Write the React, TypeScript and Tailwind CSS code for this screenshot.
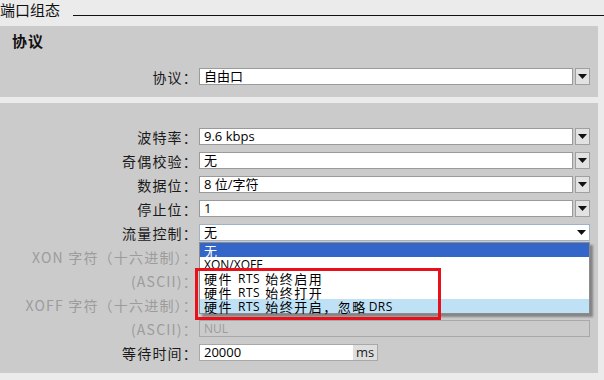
import React from "react";

const cjk = { fontFamily: '"Noto Sans CJK SC", "Noto Sans", sans-serif' };
const latin = { fontFamily: '"Open Sans", "Noto Sans CJK SC", sans-serif' };

function Arrow() {
  return (
    <svg width="9" height="5" viewBox="0 0 9 5">
      <path d="M0 0 L9 0 L4.5 5 Z" fill="#111" />
    </svg>
  );
}

function Combo({ value, active }: { value: string; active?: boolean }) {
  return (
    <div className="flex h-[17px] w-[391px]">
      <div
        className={`flex h-full flex-1 items-center border bg-white pl-[4px] text-[13px] leading-none text-black ${
          active ? "border-[#9fb3c8]" : "border-[#9a9a9a]"
        }`}
        style={latin}
      >
        {value}
      </div>
      {active ? (
        <div className="ml-[-1px] flex h-full w-[17px] items-center justify-center border border-l-0 border-[#9fb3c8] bg-white">
          <Arrow />
        </div>
      ) : (
        <div className="ml-[2px] flex h-full w-[15px] items-center justify-center border border-[#a0a0a0] bg-[#e2e2e2]">
          <Arrow />
        </div>
      )}
    </div>
  );
}

function Row({
  label,
  children,
  gray,
}: {
  label: string;
  children?: React.ReactNode;
  gray?: boolean;
}) {
  return (
    <div className="flex h-[17px] items-center">
      <div
        className={`w-[199px] pr-[1px] text-right text-[14px] leading-none tracking-[1.2px] ${
          gray ? "text-[#9c9c9c]" : "text-[#1a1a1a]"
        }`}
        style={cjk}
      >
        {label}
      </div>
      {children}
    </div>
  );
}

function Item({ children, cls }: { children: React.ReactNode; cls?: string }) {
  return (
    <div
      className={`flex h-[14px] items-center pl-[4px] text-[13px] leading-[13px] tracking-[1.5px] text-black ${cls ?? ""}`}
    >
      {children}
    </div>
  );
}

function L({ children }: { children: React.ReactNode }) {
  return (
    <span className="mx-[5px] text-[12px] leading-[13px] tracking-[0.5px]" style={latin}>
      {children}
    </span>
  );
}

export default function App() {
  return (
    <div className="relative h-[380px] w-[604px] overflow-hidden bg-[#ebebeb]" style={cjk}>
      {/* header */}
      <div className="flex h-[26px] items-start">
        <div className="mt-[1px] text-[15px] leading-[18px] text-[#111]">端口组态</div>
        <div className="ml-[13px] mt-[15px] flex-1 border-t border-[#111]" />
      </div>

      {/* section 1 */}
      <div className="h-[71px] w-[598px] bg-[#cbcbcb] pt-[6px]">
        <div className="pl-[12px] text-[15px] font-bold leading-[18px] tracking-[1px] text-[#111]">协议</div>
        <div className="mt-[18px]">
          <Row label="协议：">
            <Combo value="自由口" />
          </Row>
        </div>
      </div>

      {/* separator */}
      <div className="h-[6px]" />

      {/* section 2 */}
      <div className="flex h-[270px] w-[598px] flex-col gap-[7px] bg-[#cbcbcb] pt-[25px]">
        <Row label="波特率：">
          <Combo value="9.6 kbps" />
        </Row>
        <Row label="奇偶校验：">
          <Combo value="无" />
        </Row>
        <Row label="数据位：">
          <Combo value="8 位/字符" />
        </Row>
        <Row label="停止位：">
          <Combo value="1" />
        </Row>
        <Row label="流量控制：">
          <Combo value="无" active />
        </Row>
        <Row label="XON 字符（十六进制）：" gray />
        <Row label="(ASCII)：" gray />
        <Row label="XOFF 字符（十六进制）：" gray />
        <Row label="(ASCII)：" gray>
          <div
            className="flex h-[17px] w-[391px] items-center border border-[#a8a8a8] pl-[4px] text-[12px] leading-none text-[#9c9c9c]"
            style={latin}
          >
            NUL
          </div>
        </Row>
        <Row label="等待时间：">
          <div className="flex h-[17px] w-[179px] border border-[#a8a8a8]">
            <div
              className="flex h-full w-[153px] items-center bg-white pl-[4px] text-[13px] leading-none text-black"
              style={latin}
            >
              20000
            </div>
            <div
              className="flex h-full flex-1 items-center justify-center bg-[#dedede] text-[13px] leading-none text-[#222]"
              style={latin}
            >
              ms
            </div>
          </div>
        </Row>
      </div>

      {/* dropdown list */}
      <div className="absolute left-[199px] top-[242px] w-[391px] border border-[#8c8c8c] bg-white shadow-[3px_3px_2px_rgba(0,0,0,0.35)]">
        <Item cls="bg-[#3465c8] text-white">无</Item>
        <Item>
          <span className="text-[12px] leading-[13px] tracking-[0px]" style={latin}>
            XON/XOFF
          </span>
        </Item>
        <Item>
          硬件<L>RTS</L>始终启用
        </Item>
        <Item>
          硬件<L>RTS</L>始终打开
        </Item>
        <Item cls="bg-[#bfe1f6]">
          硬件<L>RTS</L>始终开启，忽略
          <span className="ml-[2px] text-[12px] leading-[13px] tracking-[0.5px]" style={latin}>
            DRS
          </span>
        </Item>
      </div>

      {/* red highlight */}
      <div className="absolute left-[195px] top-[268px] h-[52px] w-[246px] border-[3px] border-[#e8101a]" />
    </div>
  );
}
